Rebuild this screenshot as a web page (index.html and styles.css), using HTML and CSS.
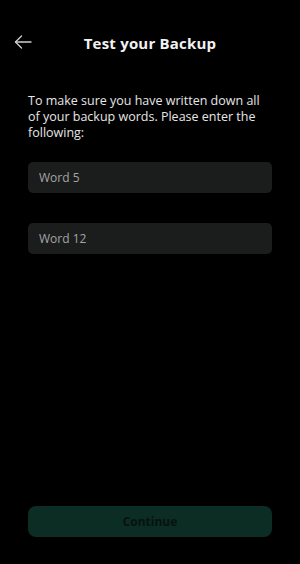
FILE: index.html
```html
<!DOCTYPE html>
<html lang="en">
<head>
  <meta charset="UTF-8">
  <meta name="viewport" content="width=device-width, initial-scale=1.0">
  <title>Test your Backup</title>
  <link rel="stylesheet" href="styles.css">
</head>
<body>
  <div class="screen">
    <header class="top-bar">
      <button class="back-btn" aria-label="Back">
        <svg width="18" height="14" viewBox="0 0 18 14" fill="none" stroke="#d0d0d0" stroke-width="1.3" stroke-linecap="round" stroke-linejoin="round">
          <path d="M17 7H1.5"/>
          <path d="M7.5 1L1.5 7l6 6"/>
        </svg>
      </button>
      <h1>Test your Backup</h1>
    </header>

    <main class="content">
      <p class="intro">To make sure you have written down all of your backup words. Please enter the following:</p>

      <div class="fields">
        <input class="word-input" type="text" placeholder="Word 5">
        <input class="word-input" type="text" placeholder="Word 12">
      </div>
    </main>

    <footer class="actions">
      <button class="continue-btn" disabled>Continue</button>
    </footer>
  </div>
</body>
</html>
```

FILE: styles.css
```css
/* Global */
body {
  margin: 0;
  background: #000;
  color: #ececec;
  font-family: 'Open Sans', sans-serif;
}

.screen {
  height: 564px;
  display: flex;
  flex-direction: column;
}

/* Header */
.top-bar {
  position: relative;
  height: 44px;
  margin-top: 21px;
  display: flex;
  align-items: center;
  justify-content: center;
}

.top-bar h1 {
  margin: 0;
  font-size: 15px;
  font-weight: 700;
  color: #f2f2f2;
  letter-spacing: 0.2px;
}

.back-btn {
  position: absolute;
  left: 14px;
  top: 14px;
  padding: 0;
  background: none;
  border: 0;
  line-height: 0;
}

/* Content */
.content {
  flex: 1;
  padding: 28px 28px 0;
}

.intro {
  margin: 0;
  font-size: 12.5px;
  line-height: 16px;
  color: #e6e6e6;
}

.fields {
  margin-top: 21px;
  display: flex;
  flex-direction: column;
  gap: 30px;
}

.word-input {
  box-sizing: border-box;
  width: 100%;
  height: 31px;
  padding: 0 11px;
  background: #1b1d1d;
  border: 0;
  border-radius: 5px;
  font-family: inherit;
  font-size: 12px;
  color: #ddd;
}

.word-input::placeholder {
  color: #a4a4a4;
}

/* Footer */
.actions {
  padding: 0 28px 27px;
}

.continue-btn {
  width: 100%;
  height: 31px;
  background: #0b2d23;
  border: 0;
  border-radius: 8px;
  font-family: inherit;
  font-size: 12px;
  font-weight: 700;
  color: #07120e;
}
```
